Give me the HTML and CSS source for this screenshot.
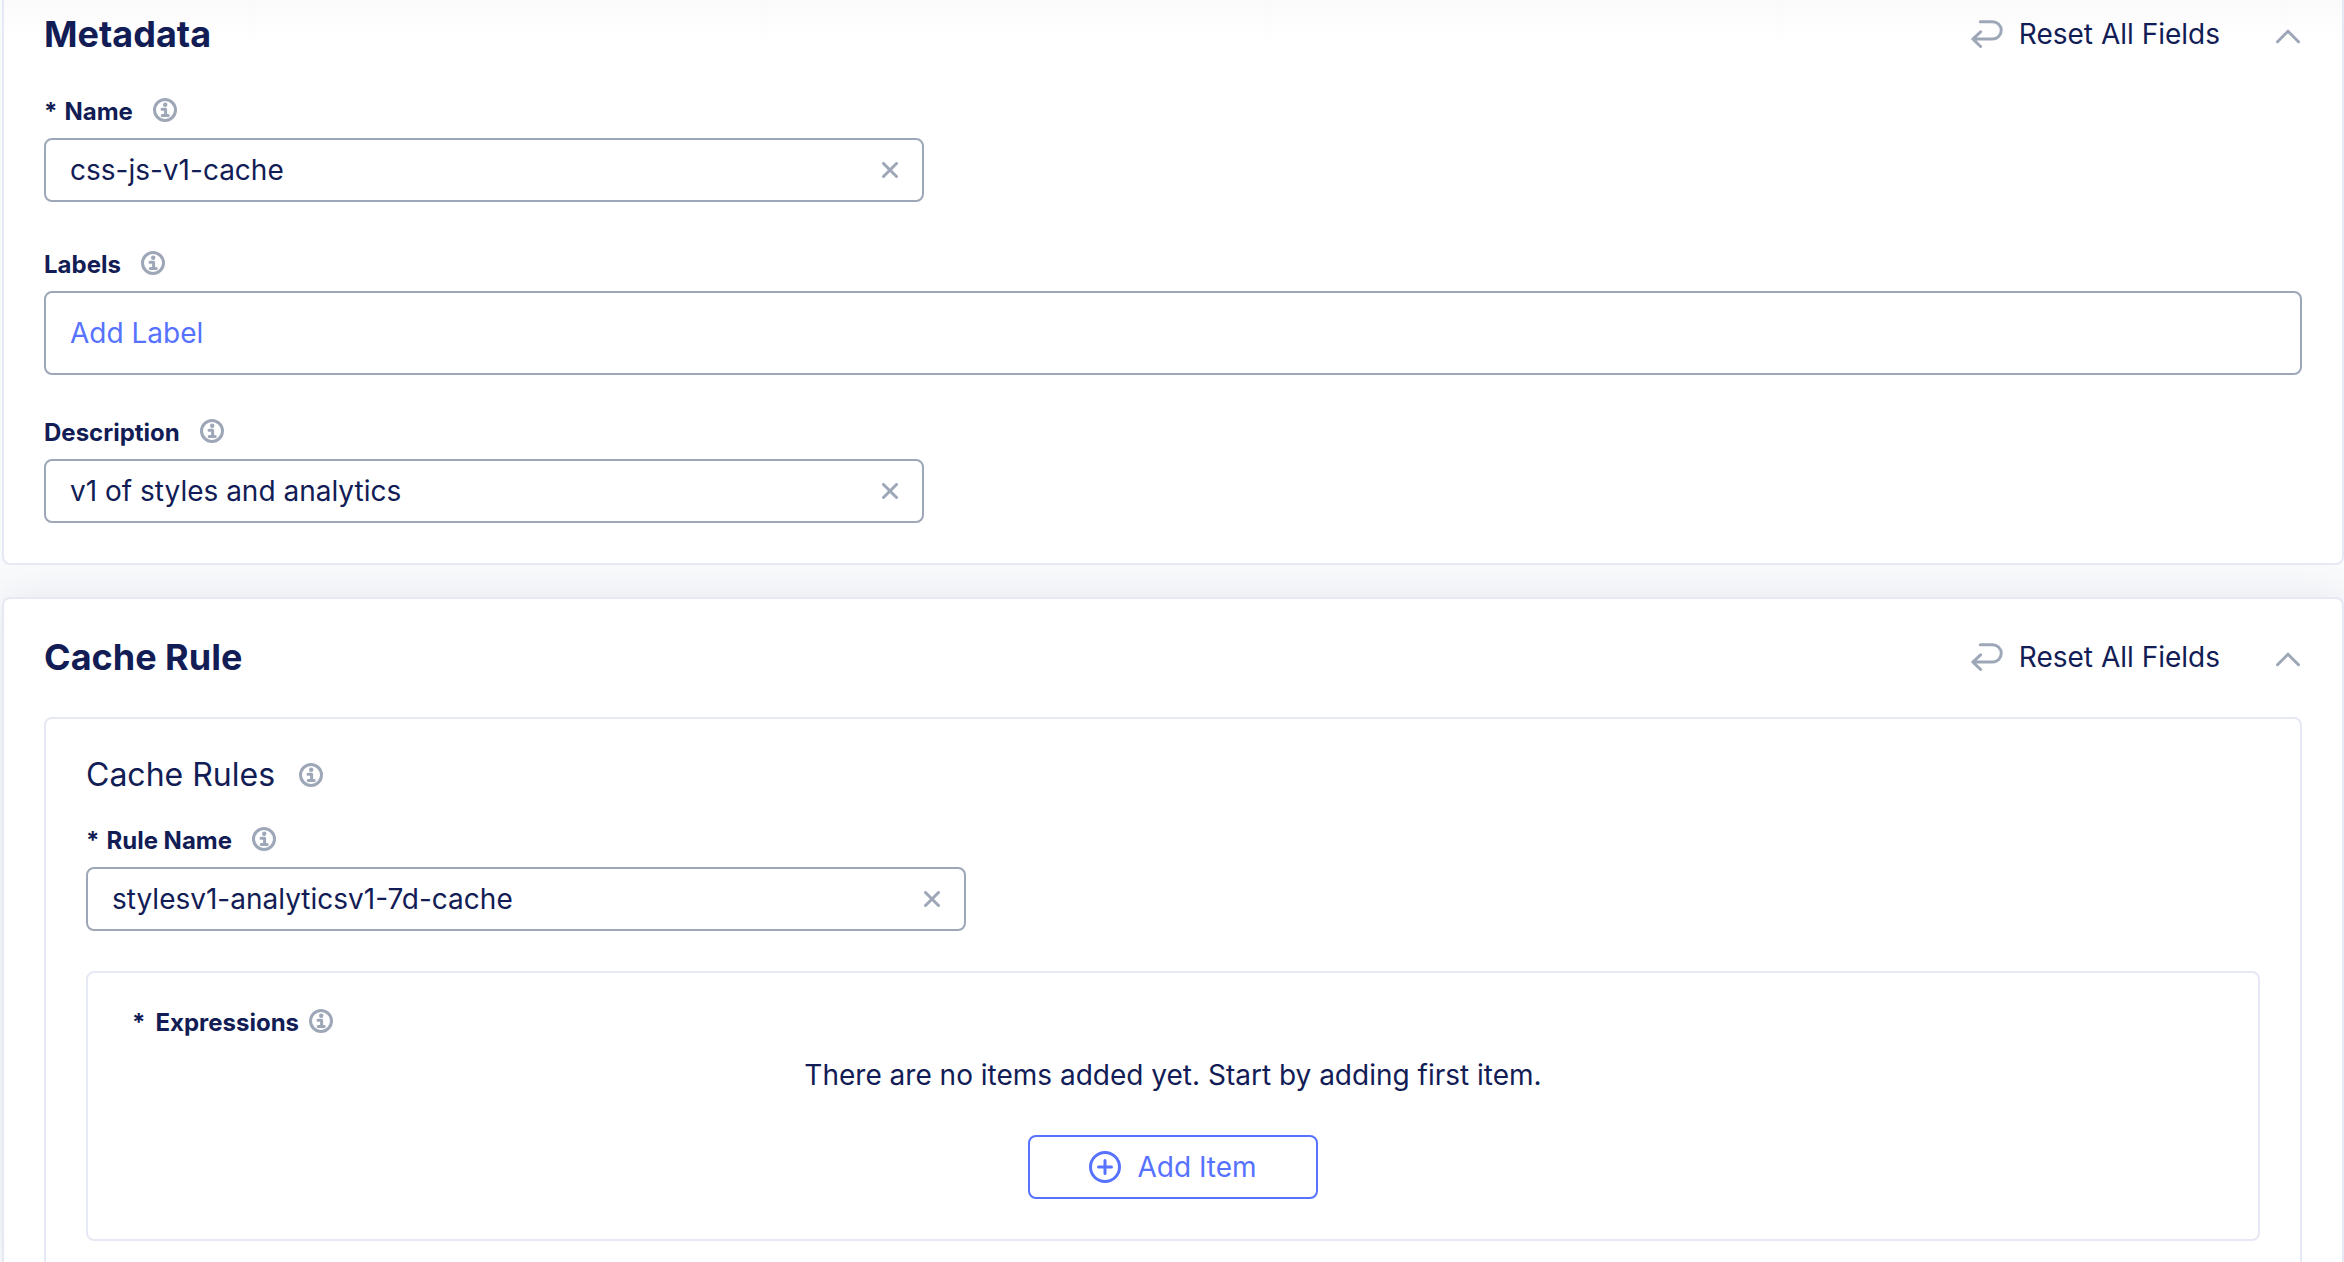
FILE: index.html
```html
<!DOCTYPE html>
<html lang="en">
<head>
  <meta charset="UTF-8" />
  <title>Cache Rule</title>
  <link rel="stylesheet" href="styles.css">
</head>
<body>
  <!-- shared icons -->
  <svg class="sprite" aria-hidden="true">
    <symbol id="info" viewBox="0 0 24 24">
      <circle cx="12" cy="12" r="10.5" fill="none" stroke="currentColor" stroke-width="3" />
      <circle cx="12.2" cy="6.8" r="2.2" fill="currentColor" />
      <path d="M9 11.2h3.6v6.4M9.2 17.6h6" fill="none" stroke="currentColor" stroke-width="3" stroke-linecap="round" stroke-linejoin="round" />
    </symbol>
    <symbol id="reset" viewBox="0 0 32 28">
      <path d="M9.3 1.7H21.6a8.6 8.6 0 0 1 0 17.3H2M9.6 11.8 1.8 19l7.8 7.5" fill="none" stroke="currentColor" stroke-width="3" stroke-linecap="round" stroke-linejoin="round" />
    </symbol>
    <symbol id="chevron" viewBox="0 0 28 28">
      <path d="M3.5 21.7 14 11.2l10.5 10.5" fill="none" stroke="currentColor" stroke-width="3" stroke-linecap="round" stroke-linejoin="round" />
    </symbol>
    <symbol id="close" viewBox="0 0 16 16">
      <path d="M1.5 1.5l13 13M14.5 1.5l-13 13" fill="none" stroke="currentColor" stroke-width="3" stroke-linecap="round" />
    </symbol>
    <symbol id="plus" viewBox="0 0 32 32">
      <circle cx="16" cy="16" r="14.5" fill="none" stroke="currentColor" stroke-width="3" />
      <path d="M16 9.5v13M9.5 16h13" fill="none" stroke="currentColor" stroke-width="3" stroke-linecap="round" />
    </symbol>
  </svg>

  <main class="page">
    <section class="card metadata">
      <header class="card-header">
        <h2 class="card-title">Metadata</h2>
        <button class="reset-btn" type="button"><svg class="reset-icon"><use href="#reset" /></svg>Reset All Fields</button>
        <button class="toggle-btn" type="button" aria-label="Collapse Metadata"><svg class="chevron-icon"><use href="#chevron" /></svg></button>
      </header>

      <div class="field">
        <div class="field-label">
          <label for="name"><span class="required">*</span>Name</label>
          <svg class="info-icon"><use href="#info" /></svg>
        </div>
        <div class="input-box">
          <input class="text-input" id="name" type="text" value="css-js-v1-cache">
          <button class="clear-btn" type="button" aria-label="Clear name"><svg class="close-icon"><use href="#close" /></svg></button>
        </div>
      </div>

      <div class="field labels-field">
        <div class="field-label">
          <label for="labels">Labels</label>
          <svg class="info-icon"><use href="#info" /></svg>
        </div>
        <div class="labels-box">
          <button class="add-label" id="labels" type="button">Add Label</button>
        </div>
      </div>

      <div class="field">
        <div class="field-label">
          <label for="description">Description</label>
          <svg class="info-icon"><use href="#info" /></svg>
        </div>
        <div class="input-box">
          <input class="text-input" id="description" type="text" value="v1 of styles and analytics">
          <button class="clear-btn" type="button" aria-label="Clear description"><svg class="close-icon"><use href="#close" /></svg></button>
        </div>
      </div>
    </section>

    <section class="card cache-rule">
      <header class="card-header">
        <h2 class="card-title">Cache Rule</h2>
        <button class="reset-btn" type="button"><svg class="reset-icon"><use href="#reset" /></svg>Reset All Fields</button>
        <button class="toggle-btn" type="button" aria-label="Collapse Cache Rule"><svg class="chevron-icon"><use href="#chevron" /></svg></button>
      </header>

      <div class="rules-panel">
        <div class="rules-heading">
          <h3 class="rules-title">Cache Rules</h3>
          <svg class="info-icon"><use href="#info" /></svg>
        </div>

        <div class="field">
          <div class="field-label">
            <label for="rule-name"><span class="required">*</span>Rule Name</label>
            <svg class="info-icon"><use href="#info" /></svg>
          </div>
          <div class="input-box">
            <input class="text-input" id="rule-name" type="text" value="stylesv1-analyticsv1-7d-cache">
            <button class="clear-btn" type="button" aria-label="Clear rule name"><svg class="close-icon"><use href="#close" /></svg></button>
          </div>
        </div>

        <div class="expressions">
          <div class="field-label expressions-label">
            <h4 class="expressions-title"><span class="required">*</span>Expressions</h4>
            <svg class="info-icon"><use href="#info" /></svg>
          </div>
          <p class="empty-text">There are no items added yet. Start by adding first item.</p>
          <button class="add-item" type="button"><svg class="plus-icon"><use href="#plus" /></svg>Add Item</button>
        </div>
      </div>
    </section>
  </main>
</body>
</html>
```
FILE: styles.css
```css
* {
  box-sizing: border-box;
}

body {
  margin: 0;
  font-family: Inter, sans-serif;
  font-size: 28px;
  line-height: 36px;
  color: #121c55;
  background-color: #f9fafc;
}

h2, h3, h4, p {
  margin: 0;
}

button {
  padding: 0;
  border: none;
  background: none;
  font: inherit;
  color: inherit;
  cursor: pointer;
}

svg {
  display: block;
  flex-shrink: 0;
  color: #9ea7b8;
}

.sprite {
  display: none;
}

.page {
  display: flex;
  flex-direction: column;
  gap: 32px;
  min-height: 100vh;
  padding-left: 2px;
  overflow: hidden;
}

/* cards */
.card {
  padding: 36px 40px 40px;
  border: 2px solid #e6e8f3;
  border-radius: 8px;
  background-color: #fff;
}

.metadata {
  padding-top: 12px;
  border-top: none;
  border-top-left-radius: 0;
  border-top-right-radius: 0;
  background-image: linear-gradient(#fafafa, #fff 40px);
}

.cache-rule {
  display: flex;
  flex-direction: column;
  flex: 1;
  padding-bottom: 0;
  border-bottom: none;
  border-bottom-left-radius: 0;
  border-bottom-right-radius: 0;
  box-shadow: 0 0 40px rgba(18, 28, 60, 0.08);
}

.card-header {
  display: flex;
  align-items: center;
  margin-bottom: 38px;
}

.card-title {
  font-size: 36px;
  line-height: 44px;
  font-weight: 700;
}

.reset-btn {
  display: flex;
  align-items: center;
  gap: 16px;
  margin-left: auto;
}

.reset-icon {
  width: 32px;
  height: 28px;
}

.toggle-btn {
  margin-left: 54px;
}

.chevron-icon {
  width: 28px;
  height: 28px;
}

/* form fields */
.field + .field {
  margin-top: 45px;
}

.labels-field + .field {
  margin-top: 40px;
}

.field-label {
  display: flex;
  align-items: center;
  gap: 20px;
  margin-bottom: 8px;
  font-size: 24px;
  line-height: 36px;
  font-weight: 700;
}

.field-label .info-icon {
  margin-bottom: 5px;
}

.required {
  margin-right: 7px;
}

.info-icon {
  width: 24px;
  height: 24px;
}

.input-box,
.labels-box {
  display: flex;
  align-items: center;
  height: 64px;
  padding: 0 24px;
  border: 2px solid #9ea7b8;
  border-radius: 8px;
  background-color: #fff;
}

.input-box {
  max-width: 880px;
}

.labels-box {
  height: 84px;
}

.text-input {
  flex: 1;
  min-width: 0;
  padding: 0;
  border: none;
  outline: none;
  background: none;
  font: inherit;
  color: inherit;
}

.close-icon {
  width: 16px;
  height: 16px;
}

.add-label {
  color: #5672ff;
}

/* cache rules */
.rules-panel {
  flex: 1;
  padding: 36px 40px 0;
  border: 2px solid #e6e8f3;
  border-bottom: none;
  border-radius: 8px 8px 0 0;
}

.rules-heading {
  display: flex;
  align-items: center;
  gap: 24px;
  margin-bottom: 28px;
}

.rules-title {
  font-size: 32px;
  line-height: 40px;
  font-weight: 400;
}

.expressions {
  display: flex;
  flex-direction: column;
  align-items: center;
  margin-top: 40px;
  padding: 32px 44px 40px;
  border: 2px solid #e6e8f3;
  border-radius: 8px;
}

.expressions-label {
  align-self: flex-start;
  gap: 10px;
  margin-bottom: 16px;
}

.expressions-label .required {
  margin-right: 10px;
}

.expressions-title {
  font-size: 24px;
  font-weight: 700;
}

.add-item {
  display: flex;
  align-items: center;
  gap: 16px;
  height: 64px;
  margin-top: 42px;
  padding: 0 59px;
  border: 2px solid #5672ff;
  border-radius: 8px;
  color: #5672ff;
}

.plus-icon {
  width: 32px;
  height: 32px;
  color: #5672ff;
}
```
